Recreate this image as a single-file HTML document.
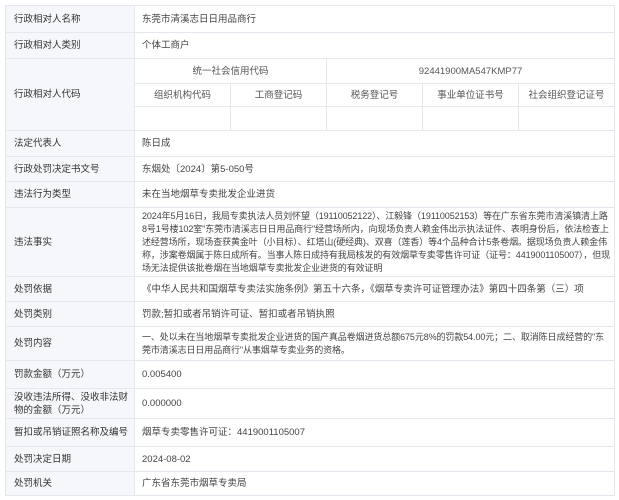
<!DOCTYPE html>
<html><head><meta charset="utf-8"><style>
body{margin:0;background:#fff;font-family:"Liberation Sans","Noto Sans CJK SC",sans-serif;font-size:9.5px;color:#444;}
table{position:absolute;left:5px;top:5px;width:609px;border-collapse:collapse;table-layout:fixed;}
td{border:1px solid #e4e8ee;padding:0 0 0 7px;vertical-align:middle;line-height:13px;}
td.l{background:#f5f7fa;color:#333;width:121px;padding-left:8px;}
td.c{text-align:center;padding:0;color:#555;}
td.s{font-size:9px;padding-right:2px;letter-spacing:-0.1px;}
</style></head><body>
<table>
<colgroup><col style="width:129px"><col style="width:96px"><col style="width:96px"><col style="width:96px"><col style="width:96px"><col style="width:96px"></colgroup>
<tr style="height:27px"><td class="l">行政相对人名称</td><td colspan="5">东莞市清溪志日日用品商行</td></tr>
<tr style="height:26px"><td class="l">行政相对人类别</td><td colspan="5">个体工商户</td></tr>
<tr style="height:25px"><td class="l" rowspan="3">行政相对人代码</td><td class="c" colspan="2">统一社会信用代码</td><td class="c" colspan="3">92441900MA547KMP77</td></tr>
<tr style="height:23px"><td class="c">组织机构代码</td><td class="c">工商登记码</td><td class="c">税务登记号</td><td class="c">事业单位证书号</td><td class="c">社会组织登记证号</td></tr>
<tr style="height:24px"><td class="c"></td><td class="c"></td><td class="c"></td><td class="c"></td><td class="c"></td></tr>
<tr style="height:26px"><td class="l">法定代表人</td><td colspan="5">陈日成</td></tr>
<tr style="height:25px"><td class="l">行政处罚决定书文号</td><td colspan="5">东烟处〔2024〕第5-050号</td></tr>
<tr style="height:26px"><td class="l">违法行为类型</td><td colspan="5">未在当地烟草专卖批发企业进货</td></tr>
<tr style="height:69px"><td class="l">违法事实</td><td colspan="5" class="s">2024年5月16日，我局专卖执法人员刘怀望（19110052122）、江毅锋（19110052153）等在广东省东莞市清溪镇清上路8号1号楼102室"东莞市清溪志日日用品商行"经营场所内，向现场负责人赖金伟出示执法证件、表明身份后，依法检查上述经营场所，现场查获黄金叶（小目标）、红塔山(硬经典)、双喜（莲香）等4个品种合计5条卷烟。据现场负责人赖金伟称，涉案卷烟属于陈日成所有。当事人陈日成持有我局核发的有效烟草专卖零售许可证（证号：4419001105007），但现场无法提供该批卷烟在当地烟草专卖批发企业进货的有效证明</td></tr>
<tr style="height:25px"><td class="l">处罚依据</td><td colspan="5">《中华人民共和国烟草专卖法实施条例》第五十六条，《烟草专卖许可证管理办法》第四十四条第（三）项</td></tr>
<tr style="height:25px"><td class="l">处罚类别</td><td colspan="5">罚款;暂扣或者吊销许可证、暂扣或者吊销执照</td></tr>
<tr style="height:34px"><td class="l">处罚内容</td><td colspan="5" class="s">一、处以未在当地烟草专卖批发企业进货的国产真品卷烟进货总额675元8%的罚款54.00元；二、取消陈日成经营的"东莞市清溪志日日用品商行"从事烟草专卖业务的资格。</td></tr>
<tr style="height:28px"><td class="l">罚款金额（万元）</td><td colspan="5">0.005400</td></tr>
<tr style="height:30px"><td class="l">没收违法所得、没收非法财物的金额（万元）</td><td colspan="5">0.000000</td></tr>
<tr style="height:28px"><td class="l">暂扣或吊销证照名称及编号</td><td colspan="5">烟草专卖零售许可证：4419001105007</td></tr>
<tr style="height:25px"><td class="l">处罚决定日期</td><td colspan="5">2024-08-02</td></tr>
<tr style="height:24px"><td class="l">处罚机关</td><td colspan="5">广东省东莞市烟草专卖局</td></tr>
</table>
</body></html>
